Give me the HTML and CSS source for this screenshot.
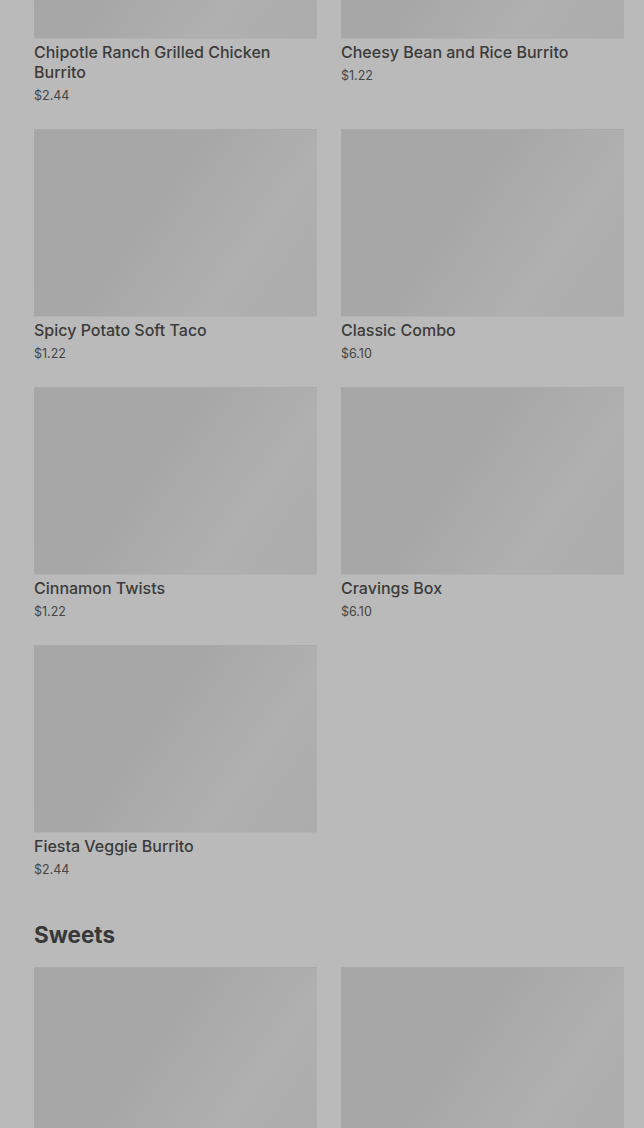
FILE: index.html
```html
<!DOCTYPE html>
<html>
<head>
    <title>Menu</title>
    <link rel="stylesheet" href="styles.css">
</head>
<body>
    <main class="menu">
        <section class="menu-section">
            <div class="item-grid">
                <div class="item">
                    <div class="item-image"></div>
                    <div class="item-name">Chipotle Ranch Grilled Chicken Burrito</div>
                    <div class="item-price">$2.44</div>
                </div>
                <div class="item">
                    <div class="item-image"></div>
                    <div class="item-name">Cheesy Bean and Rice Burrito</div>
                    <div class="item-price">$1.22</div>
                </div>
                <div class="item">
                    <div class="item-image"></div>
                    <div class="item-name">Spicy Potato Soft Taco</div>
                    <div class="item-price">$1.22</div>
                </div>
                <div class="item">
                    <div class="item-image"></div>
                    <div class="item-name">Classic Combo</div>
                    <div class="item-price">$6.10</div>
                </div>
                <div class="item">
                    <div class="item-image"></div>
                    <div class="item-name">Cinnamon Twists</div>
                    <div class="item-price">$1.22</div>
                </div>
                <div class="item">
                    <div class="item-image"></div>
                    <div class="item-name">Cravings Box</div>
                    <div class="item-price">$6.10</div>
                </div>
                <div class="item">
                    <div class="item-image"></div>
                    <div class="item-name">Fiesta Veggie Burrito</div>
                    <div class="item-price">$2.44</div>
                </div>
            </div>
        </section>

        <section class="menu-section">
            <h2 class="section-title">Sweets</h2>
            <div class="item-grid">
                <div class="item">
                    <div class="item-image"></div>
                </div>
                <div class="item">
                    <div class="item-image"></div>
                </div>
            </div>
        </section>
    </main>
</body>
</html>
```

FILE: styles.css
```css
body {
    margin: 0;
    background-color: #bababa;
    font-family: Inter, "Noto Sans", sans-serif;
    color: #3b3b3b;
    overflow: hidden;
}

.menu {
    /* page is scrolled down part way */
    margin-top: -149px;
    padding: 0 20px 0 34px;
}

.item-grid {
    display: grid;
    grid-template-columns: 1fr 1fr;
    column-gap: 24px;
    row-gap: 24px;
}

.item-image {
    height: 188px;
    background: linear-gradient(125deg, #a6a6a6 0%, #a7a7a7 42%, #b0b0b0 72%, #acacac 100%);
    box-shadow: inset 0 -1px 0 #b3b3b3, inset 0 1px 0 #a9a9a9;
}

.item-name {
    margin-top: 3px;
    font-size: 16px;
    font-weight: 500;
    line-height: 20px;
}

.item-price {
    margin-top: 5px;
    font-size: 12.5px;
    line-height: 18px;
    color: #454545;
}

.section-title {
    margin: 40px 0 16px;
    font-size: 22.5px;
    font-weight: 700;
    line-height: 32px;
    color: #383838;
}
```
